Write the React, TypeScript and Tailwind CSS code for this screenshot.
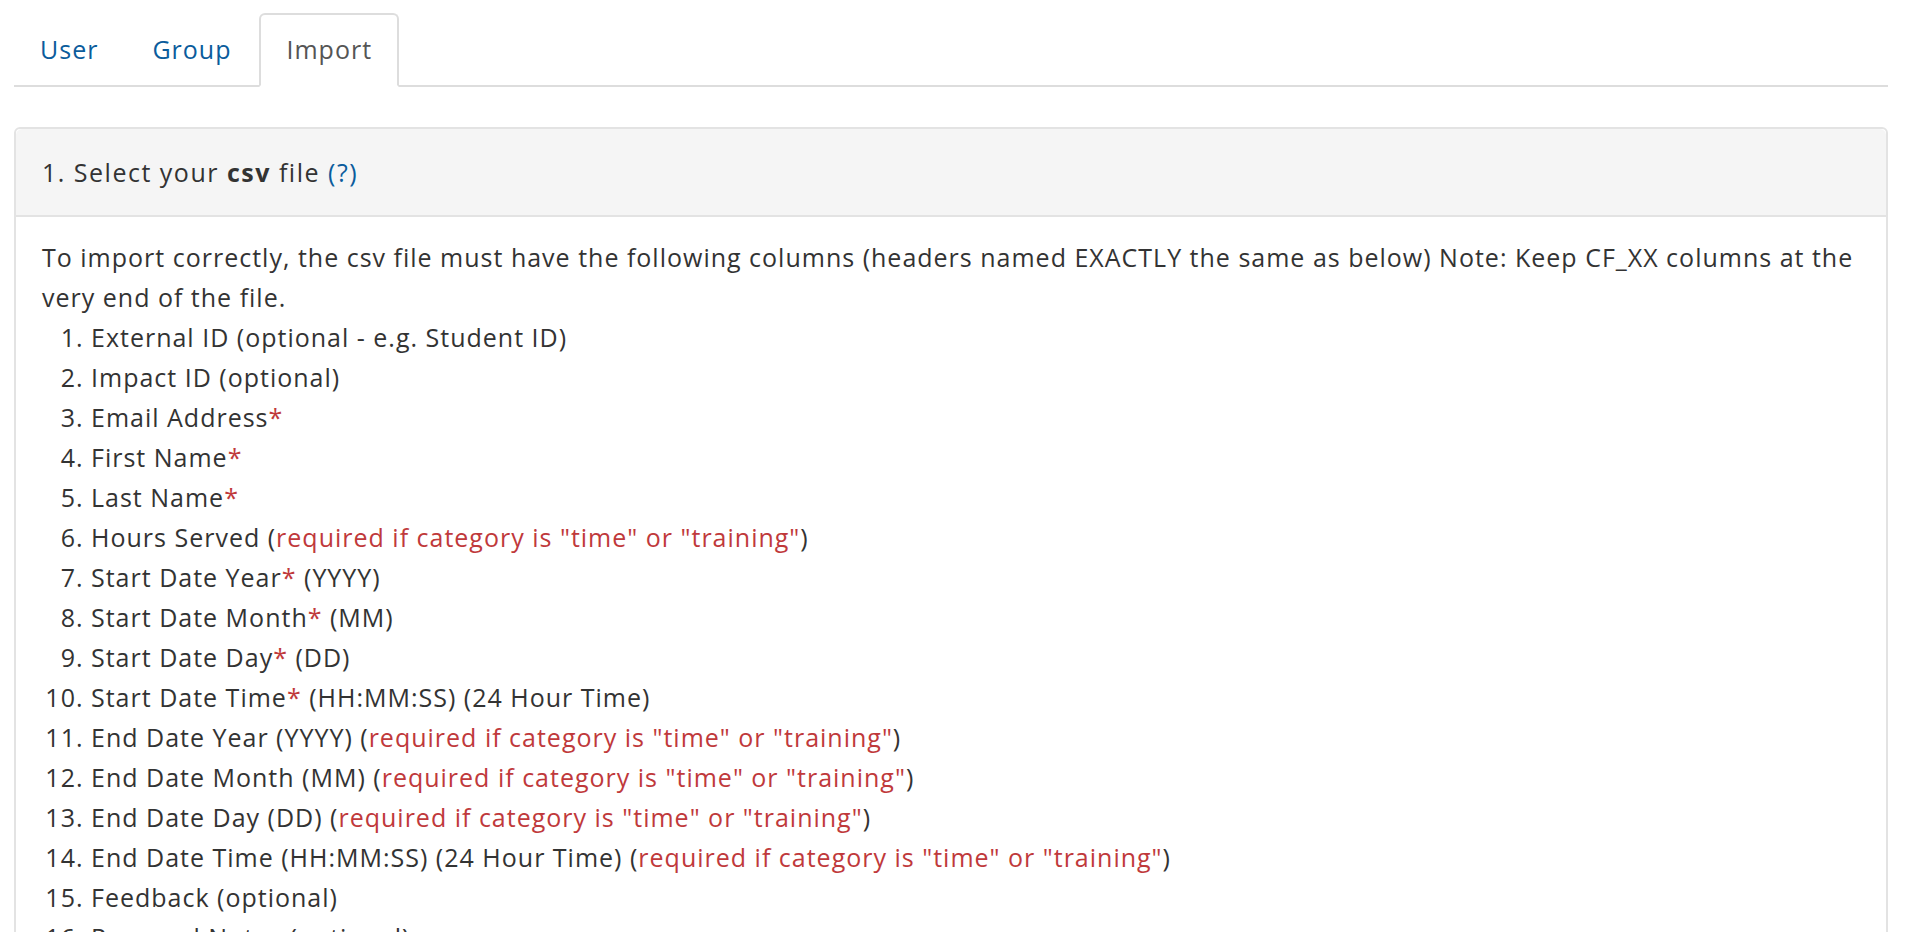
import React from "react";

const RED = "text-[#c0393b]";

const Req = ({ children }: { children: React.ReactNode }) => (
  <span className={RED}>{children}</span>
);

const Star = () => <Req>*</Req>;

const REQ_TEXT = 'required if category is "time" or "training"';

const columns: React.ReactNode[] = [
  <>External ID (optional - e.g. Student ID)</>,
  <>Impact ID (optional)</>,
  <>Email Address<Star /></>,
  <>First Name<Star /></>,
  <>Last Name<Star /></>,
  <>Hours Served (<Req>{REQ_TEXT}</Req>)</>,
  <>Start Date Year<Star /> (YYYY)</>,
  <>Start Date Month<Star /> (MM)</>,
  <>Start Date Day<Star /> (DD)</>,
  <>Start Date Time<Star /> (HH:MM:SS) (24 Hour Time)</>,
  <>End Date Year (YYYY) (<Req>{REQ_TEXT}</Req>)</>,
  <>End Date Month (MM) (<Req>{REQ_TEXT}</Req>)</>,
  <>End Date Day (DD) (<Req>{REQ_TEXT}</Req>)</>,
  <>End Date Time (HH:MM:SS) (24 Hour Time) (<Req>{REQ_TEXT}</Req>)</>,
  <>Feedback (optional)</>,
  <>Personal Notes (optional)</>,
];

const tabs = ["User", "Group", "Import"];

export default function App() {
  return (
    <div className="min-h-screen bg-white pl-[14px] pr-[22px] pt-[13px] text-[25px] leading-[40px] tracking-[1px] text-[#333] font-['Open_Sans','Noto_Sans',sans-serif]">
      <ul className="flex border-b-2 border-[#ddd]">
        {tabs.map((t) => (
          <li key={t} className="mr-[2px] -mb-[2px]">
            {t === "Import" ? (
              <span className="block px-[25px] h-[74px] leading-[68px] rounded-t-[6px] border-2 border-[#ddd] border-b-white bg-white text-[#555]">
                {t}
              </span>
            ) : (
              <a className="block px-[24px] h-[74px] leading-[68px] border-2 border-transparent text-[#0b5c9c] cursor-pointer">
                {t}
              </a>
            )}
          </li>
        ))}
      </ul>

      <div className="mt-[40px] rounded-[6px] border-2 border-[#e3e3e3]">
        <div className="h-[88px] flex items-center px-[26px] bg-[#f5f5f5] border-b-2 border-[#e3e3e3] rounded-t-[6px]">
          <span className="tracking-[1.5px]">
            1. Select your <b className="font-bold">csv</b> file{" "}
            <a className="text-[#0b5c9c] cursor-pointer">(?)</a>
          </span>
        </div>
        <div className="px-[26px] pt-[20px] pb-[20px]">
          <p>
            <span className="whitespace-nowrap">
              To import correctly, the csv file must have the following columns
              (headers named EXACTLY the same as below) Note: Keep CF_XX columns
              at the
            </span>
            <br />
            very end of the file.
          </p>
          <ol className="list-decimal pl-[49px]">
            {columns.map((c, i) => (
              <li key={i}>{c}</li>
            ))}
          </ol>
        </div>
      </div>
    </div>
  );
}
